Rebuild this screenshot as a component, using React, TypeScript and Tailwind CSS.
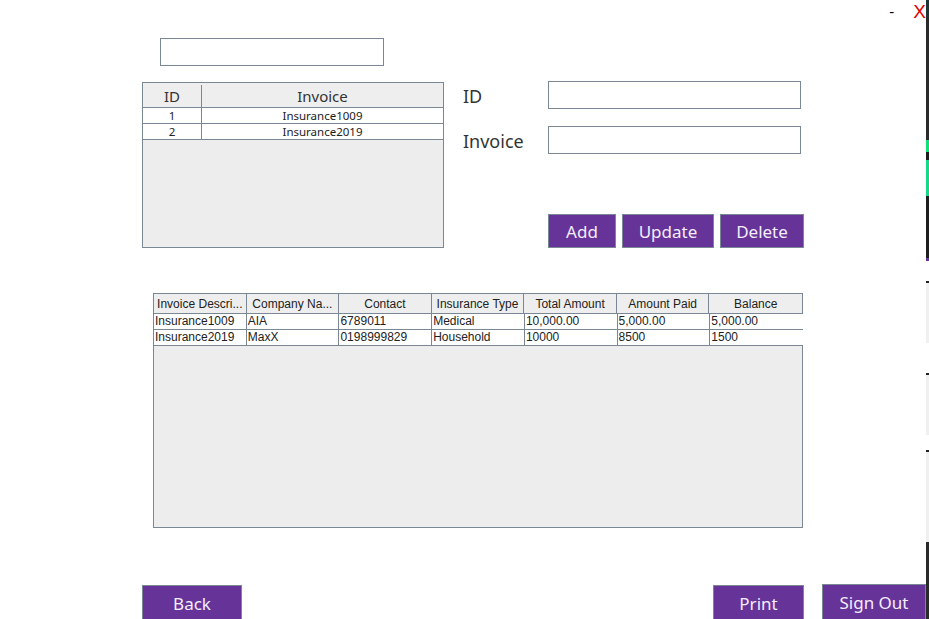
import React from "react";

const invoices = [
  { id: "1", invoice: "Insurance1009" },
  { id: "2", invoice: "Insurance2019" },
];

const details = [
  ["Insurance1009", "AIA", "6789011", "Medical", "10,000.00", "5,000.00", "5,000.00"],
  ["Insurance2019", "MaxX", "0198999829", "Household", "10000", "8500", "1500"],
];

const headers = [
  "Invoice Descri...",
  "Company Na...",
  "Contact",
  "Insurance Type",
  "Total Amount",
  "Amount Paid",
  "Balance",
];

function PurpleButton({ label, className }: { label: string; className: string }) {
  return (
    <button
      type="button"
      className={`flex shrink-0 items-center justify-center border border-[#7a8794] bg-[#663399] text-[17px] text-[#f4eefc] ${className}`}
    >
      {label}
    </button>
  );
}

function TextField({ className }: { className: string }) {
  return (
    <input
      type="text"
      className={`h-[28px] shrink-0 border border-[#7a8794] bg-white outline-none ${className}`}
    />
  );
}

function InvoiceTable() {
  return (
    <div className="mt-px flex h-[166px] w-[302px] shrink-0 flex-col border border-[#7a8794] bg-[#ededed]">
      <div className="flex h-[25px] border-b border-[#7a8794] bg-[#eeeeee] pt-[2px] text-[15px] text-[#333]">
        <div className="flex w-[59px] items-center justify-center border-r border-[#7a8794]">ID</div>
        <div className="flex flex-1 items-center justify-center">Invoice</div>
      </div>
      {invoices.map(r => (
        <div key={r.id} className="flex h-[16px] border-b border-[#7a8794] bg-white text-[11.5px] leading-[15px] text-[#222]">
          <div className="w-[59px] border-r border-[#7a8794] text-center">{r.id}</div>
          <div className="flex-1 text-center">{r.invoice}</div>
        </div>
      ))}
    </div>
  );
}

function DetailTable() {
  return (
    <div className="ml-[153px] mt-[45px] flex h-[235px] w-[650px] shrink-0 flex-col border border-[#7a8794] bg-[#ededed] font-['Liberation_Sans',Arial,sans-serif] text-[12px] text-[#222]">
      <div className="flex h-[20px] border-b border-[#7a8794] bg-[#eeeeee]">
        {headers.map((h, i) => (
          <div
            key={h}
            className={`flex w-[93px] items-center justify-center whitespace-nowrap ${i < headers.length - 1 ? "border-r border-[#7a8794]" : ""}`}
          >
            {h}
          </div>
        ))}
      </div>
      {details.map(row => (
        <div key={row[0]} className="flex h-[16px] w-[649px] border-b border-[#7a8794] bg-white leading-[15px]">
          {row.map((c, i) => (
            <div
              key={i}
              className={`w-[93px] overflow-hidden whitespace-nowrap pl-[1px] ${i < row.length - 1 ? "border-r border-[#7a8794]" : ""}`}
            >
              {c}
            </div>
          ))}
        </div>
      ))}
    </div>
  );
}

function DesktopStrip() {
  return (
    <div className="flex w-[3px] shrink-0 flex-col">
      <div className="h-[18px] bg-[#1f3434]" />
      <div className="h-[122px] bg-[#2a2a2a]" />
      <div className="h-[12px] bg-[#12e07a]" />
      <div className="h-[8px] bg-[#1d1d1d]" />
      <div className="h-[36px] bg-[#17d886]" />
      <div className="h-[62px] bg-[#1e1e1e]" />
      <div className="h-[3px] bg-[#663399]" />
      <div className="h-[20px] bg-white" />
      <div className="h-[2px] bg-[#222]" />
      <div className="h-[60px] bg-[#f0f0f0]" />
      <div className="h-[30px] bg-white" />
      <div className="h-[2px] bg-[#222]" />
      <div className="h-[60px] bg-[#f0f0f0]" />
      <div className="h-[15px] bg-white" />
      <div className="h-[2px] bg-[#222]" />
      <div className="h-[90px] bg-[#f0f0f0]" />
      <div className="flex-1 bg-[#2a2a2a]" />
    </div>
  );
}

export default function App() {
  return (
    <div className="flex h-[619px] w-[929px] overflow-hidden bg-white font-['Noto_Sans','Open_Sans',sans-serif]">
      <div className="flex w-[926px] shrink-0 flex-col">
        {/* window controls */}
        <div className="flex h-[22px] shrink-0 items-start justify-end font-['Liberation_Sans',Arial,sans-serif]">
          <span className="mr-[19px] mt-[1px] text-[15px] text-black">-</span>
          <span className="mt-[1px] text-[19px] leading-[22px] text-[#e00000]">X</span>
        </div>

        <TextField className="ml-[160px] mt-[16px] w-[224px]" />

        <div className="mt-[15px] flex shrink-0">
          <div className="ml-[142px]">
            <InvoiceTable />
          </div>
          <div className="ml-[19px] flex flex-col">
            <div className="flex h-[28px] items-center">
              <label className="w-[85px] pt-[3px] text-[18px] leading-[25px] text-[#333]">ID</label>
              <TextField className="w-[253px]" />
            </div>
            <div className="mt-[17px] flex h-[28px] items-center">
              <label className="w-[85px] pt-[3px] text-[18px] leading-[25px] text-[#333]">Invoice</label>
              <TextField className="w-[253px]" />
            </div>
            <div className="ml-[85px] mt-[60px] flex gap-[6px]">
              <PurpleButton label="Add" className="h-[34px] w-[68px] pt-[2px]" />
              <PurpleButton label="Update" className="h-[34px] w-[92px] pt-[2px]" />
              <PurpleButton label="Delete" className="h-[34px] w-[84px] pt-[2px]" />
            </div>
          </div>
        </div>

        <DetailTable />

        <div className="mt-[56px] flex h-[34px] shrink-0 items-start">
          <PurpleButton label="Back" className="ml-[142px] mt-px h-[37px] w-[100px]" />
          <PurpleButton label="Print" className="ml-[471px] mt-px h-[37px] w-[91px]" />
          <PurpleButton label="Sign Out" className="ml-[18px] h-[37px] w-[104px]" />
        </div>
      </div>
      <DesktopStrip />
    </div>
  );
}
